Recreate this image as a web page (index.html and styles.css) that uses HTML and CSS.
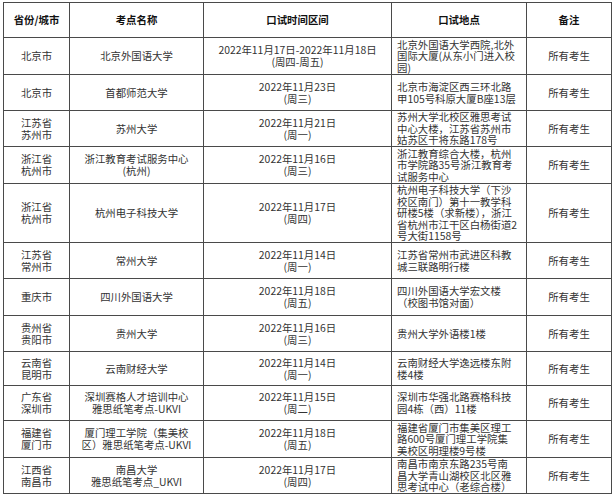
FILE: index.html
```html
<!DOCTYPE html>
<html lang="zh-CN">
<head>
<meta charset="utf-8">
<title>口试考点</title>
<link rel="stylesheet" href="styles.css">
</head>
<body>
<div class="wrap">
<table class="exam">
  <colgroup>
    <col class="c-city">
    <col class="c-name">
    <col class="c-date">
    <col class="c-addr">
    <col class="c-note">
  </colgroup>
  <thead>
    <tr><th>省份/城市</th><th>考点名称</th><th>口试时间区间</th><th>口试地点</th><th>备注</th></tr>
  </thead>
  <tbody>
    <tr>
      <td>北京市</td><td>北京外国语大学</td>
      <td>2022年11月17日-2022年11月18日<br>(周四-周五)</td>
      <td class="addr">北京外国语大学西院,北外<br>国际大厦(从东小门进入校<br>园)</td>
      <td>所有考生</td>
    </tr>
    <tr>
      <td>北京市</td><td>首都师范大学</td>
      <td>2022年11月23日<br>(周三)</td>
      <td class="addr">北京市海淀区西三环北路<br>甲105号科原大厦B座13层</td>
      <td>所有考生</td>
    </tr>
    <tr>
      <td>江苏省<br>苏州市</td><td>苏州大学</td>
      <td>2022年11月21日<br>(周一)</td>
      <td class="addr">苏州大学北校区雅思考试<br>中心大楼，江苏省苏州市<br>姑苏区干将东路178号</td>
      <td>所有考生</td>
    </tr>
    <tr>
      <td>浙江省<br>杭州市</td><td>浙江教育考试服务中心<br>(杭州)</td>
      <td>2022年11月16日<br>(周三)</td>
      <td class="addr">浙江教育综合大楼，杭州<br>市学院路35号浙江教育考<br>试服务中心</td>
      <td>所有考生</td>
    </tr>
    <tr>
      <td>浙江省<br>杭州市</td><td>杭州电子科技大学</td>
      <td>2022年11月17日<br>(周四)</td>
      <td class="addr">杭州电子科技大学（下沙<br>校区南门）第十一教学科<br>研楼5楼（求新楼），浙江<br>省杭州市江干区白杨街道2<br>号大街1158号</td>
      <td>所有考生</td>
    </tr>
    <tr>
      <td>江苏省<br>常州市</td><td>常州大学</td>
      <td>2022年11月14日<br>(周一)</td>
      <td class="addr">江苏省常州市武进区科教<br>城三联路明行楼</td>
      <td>所有考生</td>
    </tr>
    <tr>
      <td>重庆市</td><td>四川外国语大学</td>
      <td>2022年11月18日<br>(周五)</td>
      <td class="addr">四川外国语大学宏文楼<br>（校图书馆对面）</td>
      <td>所有考生</td>
    </tr>
    <tr>
      <td>贵州省<br>贵阳市</td><td>贵州大学</td>
      <td>2022年11月16日<br>(周三)</td>
      <td class="addr">贵州大学外语楼1楼</td>
      <td>所有考生</td>
    </tr>
    <tr>
      <td>云南省<br>昆明市</td><td>云南财经大学</td>
      <td>2022年11月14日<br>(周一)</td>
      <td class="addr">云南财经大学逸远楼东附<br>楼4楼</td>
      <td>所有考生</td>
    </tr>
    <tr>
      <td>广东省<br>深圳市</td><td>深圳赛格人才培训中心<br>雅思纸笔考点-UKVI</td>
      <td>2022年11月15日<br>(周二)</td>
      <td class="addr">深圳市华强北路赛格科技<br>园4栋（西）11楼</td>
      <td>所有考生</td>
    </tr>
    <tr>
      <td>福建省<br>厦门市</td><td>厦门理工学院（集美校<br>区）雅思纸笔考点-UKVI</td>
      <td>2022年11月18日<br>(周五)</td>
      <td class="addr">福建省厦门市集美区理工<br>路600号厦门理工学院集<br>美校区明理楼9号楼</td>
      <td>所有考生</td>
    </tr>
    <tr>
      <td>江西省<br>南昌市</td><td>南昌大学<br>雅思纸笔考点_UKVI</td>
      <td>2022年11月17日<br>(周四)</td>
      <td class="addr">南昌市南京东路235号南<br>昌大学青山湖校区北区雅<br>思考试中心（老综合楼）</td>
      <td>所有考生</td>
    </tr>
  </tbody>
</table>
</div>
</body>
</html>
```

FILE: styles.css
```css
html, body {
  margin: 0;
  padding: 0;
  background: #fff;
}

.wrap {
  padding: 2px 0 0 3px;
}

.exam {
  border-collapse: collapse;
  table-layout: fixed;
  width: 608px;
  font-family: "Microsoft YaHei", "Noto Sans CJK SC", "Noto Sans", sans-serif;
  font-size: 10.4px;
  line-height: 11.6px;
  color: #333;
}

.c-city { width: 66px; }
.c-name { width: 134px; }
.c-date { width: 188px; }
.c-addr { width: 135px; }
.c-note { width: 85px; }

.exam th,
.exam td {
  border: 1px solid #4a4a4a;
  padding: 0;
  text-align: center;
  vertical-align: middle;
  white-space: nowrap;
  overflow: hidden;
}

.exam th {
  height: 34px;
  font-weight: bold;
  color: #111;
}

.exam td.addr {
  text-align: left;
  padding-left: 5px;
}

/* row heights (line to line) follow the reference: cell height + 1px border */
.exam tbody tr td { height: 35px; }
.exam tbody tr:nth-child(1) td { height: 36px; }
.exam tbody tr:nth-child(4) td { height: 36px; }
.exam tbody tr:nth-child(5) td { height: 58px; }
.exam tbody tr:nth-child(7) td { height: 36px; }
.exam tbody tr:nth-child(9) td { height: 33px; }
.exam tbody tr:nth-child(10) td { height: 34px; }
.exam tbody tr:nth-child(11) td { height: 36px; }
```
